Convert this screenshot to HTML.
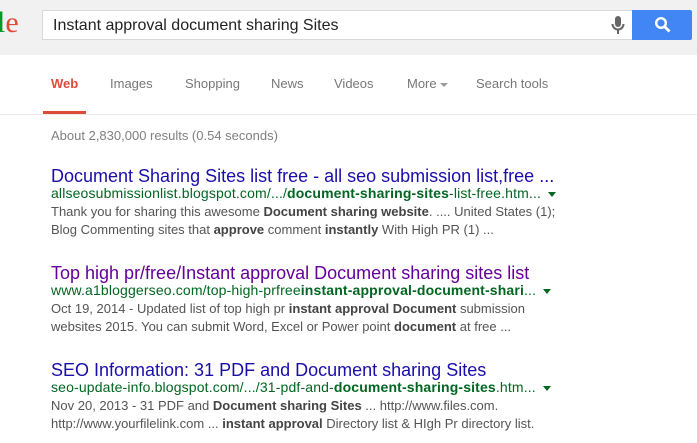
<!DOCTYPE html>
<html><head><style>
body{margin:0;width:697px;height:443px;overflow:hidden;background:#fff;font-family:"Liberation Sans",Arial,sans-serif;position:relative}
.top{position:absolute;left:0;top:0;width:697px;height:55px;background:#f1f1f1}
.logo{position:absolute;left:-3px;top:6px;font-family:"Liberation Serif",serif;font-size:30px;color:#dd4b39}
.box{position:absolute;left:42px;top:10px;width:589px;height:28px;background:#fff;border:1px solid #d9d9d9;border-right:none}
.box span{position:absolute;left:10px;top:6px;font-size:16px;color:#222}
.btn{position:absolute;left:632px;top:10px;width:60px;height:30px;background:#4285f4;border-radius:0 2px 2px 0}
.tab{position:absolute;top:76px;font-size:13px;color:#777}
.ul{position:absolute;left:43px;top:111px;width:43px;height:3px;background:#dd4b39}
.div{position:absolute;left:0;top:114px;width:697px;height:1px;background:#ebebeb}
.l{position:absolute;left:51px;white-space:nowrap}
.t{font-size:18px;color:#1a0dab}
.v{color:#609}
.u{font-size:14px;color:#006621;letter-spacing:0.15px}
.s{font-size:13px;color:#545454}
b{color:#444}
.u b{color:#006621}
.arr{display:inline-block;width:0;height:0;border-left:4px solid transparent;border-right:4px solid transparent;border-top:5px solid #006621;margin-left:7px;vertical-align:middle}
</style></head><body>
<div class="top"></div>
<div class="logo"><span style="color:#009925">l</span>e</div>
<div class="box"><span>Instant approval document sharing Sites</span>
<svg style="position:absolute;left:568px;top:5px" width="14" height="20" viewBox="0 0 14 20"><rect x="4" y="0" width="6" height="11" rx="3" fill="#666"/><path d="M1.5 8a5.5 5.5 0 0 0 11 0" stroke="#666" stroke-width="2" fill="none"/><rect x="6" y="13" width="2" height="5" fill="#666"/></svg></div>
<div class="btn"><svg style="position:absolute;left:22px;top:6px" width="18" height="18" viewBox="0 0 18 18"><circle cx="7" cy="7" r="4.8" stroke="#fff" stroke-width="2.4" fill="none"/><path d="M10.5 10.5L15.5 15.5" stroke="#fff" stroke-width="2.8"/></svg></div>
<div class="tab" style="left:51px;color:#dd4b39;font-weight:bold">Web</div>
<div class="tab" style="left:110px">Images</div>
<div class="tab" style="left:185px">Shopping</div>
<div class="tab" style="left:271px">News</div>
<div class="tab" style="left:334px">Videos</div>
<div class="tab" style="left:407px">More <span style="display:inline-block;border-left:4px solid transparent;border-right:4px solid transparent;border-top:4px solid #999;vertical-align:middle"></span></div>
<div class="tab" style="left:476px">Search tools</div>
<div class="ul"></div><div class="div"></div>
<div class="l s" style="top:128px;color:#808080">About 2,830,000 results (0.54 seconds)</div>

<div class="l t" style="top:166px">Document Sharing Sites list free - all seo submission list,free ...</div>
<div class="l u" style="top:185px">allseosubmissionlist.blogspot.com/.../<b>document-sharing-sites</b>-list-free.htm...<span class="arr"></span></div>
<div class="l s" style="top:204px">Thank you for sharing this awesome <b>Document sharing website</b>. .... United States (1);</div>
<div class="l s" style="top:222px">Blog Commenting sites that <b>approve</b> comment <b>instantly</b> With High PR (1) ...</div>

<div class="l t v" style="top:263px">Top high pr/free/Instant approval Document sharing sites list</div>
<div class="l u" style="top:282px">www.a1bloggerseo.com/top-high-prfree<b>instant-approval-document-shari</b>...<span class="arr"></span></div>
<div class="l s" style="top:301px">Oct 19, 2014 - Updated list of top high pr <b>instant approval Document</b> submission</div>
<div class="l s" style="top:319px">websites 2015. You can submit Word, Excel or Power point <b>document</b> at free ...</div>

<div class="l t" style="top:360px">SEO Information: 31 PDF and Document sharing Sites</div>
<div class="l u" style="top:379px">seo-update-info.blogspot.com/.../31-pdf-and-<b>document-sharing-sites</b>.htm...<span class="arr"></span></div>
<div class="l s" style="top:398px">Nov 20, 2013 - 31 PDF and <b>Document sharing Sites</b> ... http://www.files.com.</div>
<div class="l s" style="top:416px">http://www.yourfilelink.com ... <b>instant approval</b> Directory list &amp; HIgh Pr directory list.</div>
</body></html>
